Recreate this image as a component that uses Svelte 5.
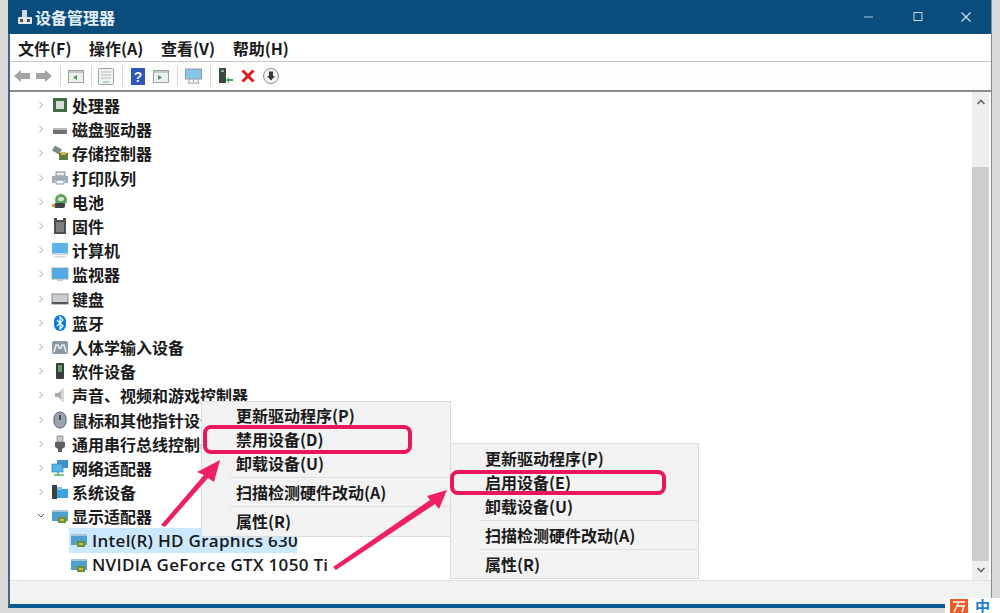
<script>
  const categories = [
    ["cpu", "处理器"], ["disk", "磁盘驱动器"], ["storage", "存储控制器"], ["printer", "打印队列"],
    ["battery", "电池"], ["firmware", "固件"], ["computer", "计算机"], ["monitor", "监视器"],
    ["keyboard", "键盘"], ["bluetooth", "蓝牙"], ["hid", "人体学输入设备"], ["software", "软件设备"],
    ["sound", "声音、视频和游戏控制器"], ["mouse", "鼠标和其他指针设备"], ["usb", "通用串行总线控制器"],
    ["network", "网络适配器"], ["system", "系统设备"]
  ];
  const adapters = [
    { name: "Intel(R) HD Graphics 630", selected: true },
    { name: "NVIDIA GeForce GTX 1050 Ti", selected: false }
  ];
  const menus = [
    { cls: "menu-a", second: "禁用设备(D)" },
    { cls: "menu-b", second: "启用设备(E)" }
  ];
</script>

{#snippet icon(kind)}
  <svg class="icon" width="18" height="18" viewBox="0 0 18 18">
    {#if kind === "cpu"}
      <rect x="2" y="2" width="14" height="14" fill="#3f6b45" />
      <rect x="5" y="5" width="8" height="8" fill="#d8dcd8" />
    {:else if kind === "disk"}
      <rect x="2" y="8" width="14" height="6" rx="1" fill="#6d7072" />
      <rect x="2" y="8" width="14" height="2" fill="#b8bcbf" />
    {:else if kind === "storage"}
      <rect x="2" y="3" width="8" height="6" fill="#7d8a8a" transform="rotate(30 6 6)" />
      <rect x="8" y="9" width="9" height="7" fill="#5f7d3a" />
      <rect x="10" y="8" width="5" height="3" fill="#d4b24a" />
    {:else if kind === "printer"}
      <rect x="5" y="3" width="9" height="4" fill="#e8eef2" stroke="#7a8a96" />
      <path d="M1 7h16v7h-3v-3H4v3H1z" fill="#a0abb4" />
      <rect x="5" y="11" width="8" height="4" fill="#f4f6f8" stroke="#8a96a0" />
    {:else if kind === "battery"}
      <circle cx="10" cy="7" r="6" fill="#5da35a" />
      <ellipse cx="10" cy="6" rx="3" ry="2" fill="#d9e6d9" />
      <rect x="3" y="10" width="11" height="5" rx="2" fill="#3d4144" />
      <rect x="1" y="11" width="3" height="3" fill="#c9a22e" />
    {:else if kind === "firmware"}
      <path d="M3 1h3v2h6V1h3v16H3z" fill="#4b4d4f" />
      <rect x="5" y="5" width="8" height="10" fill="#7b7d7f" />
    {:else if kind === "computer"}
      <rect x="1" y="2" width="16" height="10" fill="#58b4ea" />
      <rect x="1" y="12" width="16" height="2" fill="#cfd8dd" />
      <rect x="3" y="15" width="12" height="1.500" fill="#d6dcdf" />
    {:else if kind === "monitor"}
      <rect x="1" y="3" width="16" height="11" fill="#4fa9e2" stroke="#8fa8b8" />
      <rect x="6" y="14" width="6" height="2" fill="#c0cad0" />
    {:else if kind === "keyboard"}
      <rect x="1" y="4" width="16" height="10" fill="#c9ced2" stroke="#888" />
      <rect x="1" y="12" width="16" height="2" fill="#55585a" />
    {:else if kind === "bluetooth"}
      <rect x="3" y="1" width="12" height="16" rx="6" fill="#0a7be0" />
      <path d="M6 6l6 6-3 3V3l3 3-6 6" fill="none" stroke="#fff" stroke-width="1.200" />
    {:else if kind === "hid"}
      <rect x="1" y="3" width="16" height="13" rx="2" fill="#8a99a8" />
      <path d="M3 14l2-7h2l1 3h2l1-3h2l2 7" fill="none" stroke="#e8edf0" stroke-width="1.600" />
    {:else if kind === "software"}
      <rect x="5" y="1" width="8" height="16" rx="1" fill="#3b3f3c" />
      <rect x="7" y="3" width="4" height="7" fill="#5ba35a" />
    {:else if kind === "sound"}
      <path d="M4 7h3l6-5v14l-6-5H4z" fill="#a6acb0" />
      <rect x="10" y="3" width="3" height="12" fill="#d3d7da" />
    {:else if kind === "mouse"}
      <rect x="3" y="1" width="12" height="16" rx="6" fill="#9aa3ae" stroke="#5a6068" />
      <rect x="8" y="4" width="2" height="5" fill="#474c52" />
    {:else if kind === "usb"}
      <rect x="6" y="1" width="6" height="6" fill="#c6c8ca" stroke="#666" stroke-width=".6" />
      <path d="M4 7h10v5l-3 2v3H7v-3l-3-2z" fill="#5c6064" />
    {:else if kind === "network"}
      <rect x="6" y="1" width="11" height="8" fill="#3a93d0" />
      <rect x="1" y="5" width="11" height="8" fill="#58b4ea" stroke="#2f7fb5" stroke-width=".7" />
      <path d="M3 16h10M7 13v3" stroke="#57b45a" stroke-width="1.600" />
    {:else if kind === "system"}
      <rect x="1" y="2" width="5" height="14" fill="#3d4144" />
      <rect x="6" y="6" width="11" height="9" fill="#39a2e0" />
      <rect x="6" y="4" width="5" height="3" fill="#7cc5ee" />
    {:else}
      <rect x="1" y="3" width="16" height="11" fill="#4f9fd0" />
      <rect x="1" y="3" width="16" height="2" fill="#a9c6d8" />
      <rect x="7" y="10" width="8" height="6" fill="#6b8f35" />
      <rect x="9" y="12" width="4" height="2" fill="#e0b93c" />
    {/if}
  </svg>
{/snippet}

<div class="window">
  <header class="title">
    <svg width="16" height="16" viewBox="0 0 16 16">
      <rect x="5" y="1" width="5" height="7" fill="#cfd8de" />
      <rect x="1" y="8" width="14" height="7" rx="1" fill="#e4e8ea" />
      <rect x="3" y="10" width="3" height="3" fill="#45525c" />
      <rect x="10" y="10" width="3" height="3" fill="#45525c" />
    </svg>
    <span class="title-text">设备管理器</span>
    <div class="controls">
      <svg width="12" height="12" viewBox="0 0 12 12"><path d="M1 6h9" stroke="#a9c8dc" stroke-width="1" /></svg>
      <svg width="12" height="12" viewBox="0 0 12 12"><rect x="2" y="1.500" width="8" height="8" fill="none" stroke="#c3dbe9" /></svg>
      <svg width="12" height="12" viewBox="0 0 12 12"><path d="M1.500 1.500l9 9M10.500 1.500l-9 9" stroke="#d5e4ee" stroke-width="1.100" /></svg>
    </div>
  </header>

  <nav class="menubar">
    <span>文件(F)</span><span>操作(A)</span><span>查看(V)</span><span>帮助(H)</span>
  </nav>

  <div class="toolbar">
    <svg class="back" width="16" height="14" viewBox="0 0 16 14"><path d="M0 7l7-6v3h9v6H7v3z" fill="#a3a5a5" /></svg>
    <svg width="16" height="14" viewBox="0 0 16 14"><path d="M16 7L9 1v3H0v6h9v3z" fill="#a3a5a5" /></svg>
    <i class="sep snug"></i>
    <svg width="16" height="16" viewBox="0 0 16 16"><rect x=".5" y="2.500" width="15" height="12" fill="#eef0f0" stroke="#98a0a0" /><rect x="1" y="3" width="14" height="2" fill="#c2c8c8" /><path d="M9 7v5l-4-2.500z" fill="#4e9a58" /></svg>
    <i class="sep tight"></i>
    <svg width="16" height="17" viewBox="0 0 16 17"><rect x=".5" y=".5" width="15" height="16" rx="1" fill="#f0f2f2" stroke="#9aa2a2" /><path d="M3 4h10M3 7h10M3 10h10" stroke="#b4bcbc" /><path d="M5 14h6" stroke="#7fa8bc" /></svg>
    <i class="sep"></i>
    <svg width="14" height="17" viewBox="0 0 14 17"><rect width="14" height="17" fill="#2f58b4" /><text x="7" y="14" text-anchor="middle" class="help">?</text></svg>
    <svg width="16" height="16" viewBox="0 0 16 16"><rect x=".5" y="2.500" width="15" height="12" fill="#eef0f0" stroke="#98a0a0" /><rect x="1" y="3" width="14" height="2" fill="#c2c8c8" /><path d="M5 7v5l4-2.500z" fill="#4e9a58" /></svg>
    <i class="sep snug"></i>
    <svg width="17" height="17" viewBox="0 0 17 17"><rect x=".5" y="1" width="16" height="10" fill="#8cc4e8" stroke="#8aa0ae" /><path d="M8.500 11v3M3 15h11M5 11l-2 4M12 11l2 4" stroke="#8aa0ae" /></svg>
    <i class="sep snug"></i>
    <svg width="15" height="17" viewBox="0 0 15 17"><rect x="1" y="0" width="7" height="15" fill="#3c4a3e" /><rect x="3" y="2" width="3" height="2" fill="#8fae8f" /><path d="M8 12l3-3v2h4v2h-4v2z" fill="#3aa855" /></svg>
    <svg width="14" height="14" viewBox="0 0 14 14"><path d="M1.500 1.500l11 11M12.500 1.500l-11 11" stroke="#d81e24" stroke-width="3" /></svg>
    <svg width="16" height="16" viewBox="0 0 16 16"><circle cx="8" cy="8" r="7.500" fill="#f4f4f4" stroke="#8e8e8e" /><path d="M6 3.500h4V8h2l-4 4.500L4 8h2z" fill="#3a3a3a" /></svg>
  </div>

  <div class="content">
    <div class="tree">
      {#each categories as [kind, label]}
        <div class="row">
          <svg class="chevron" width="6" height="8" viewBox="0 0 6 8"><path d="M1.500 1l3 3-3 3" fill="none" stroke="#a6a6a6" /></svg>
          {@render icon(kind)}
          <span>{label}</span>
        </div>
      {/each}
      <div class="row">
        <svg class="chevron" width="8" height="6" viewBox="0 0 8 6"><path d="M1 1l3 3 3-3" fill="none" stroke="#555" /></svg>
        {@render icon("display")}
        <span>显示适配器</span>
      </div>
      {#each adapters as adapter}
        <div class="row child" class:selected={adapter.selected}>
          {@render icon("display")}
          <span>{adapter.name}</span>
        </div>
      {/each}
    </div>
    <div class="scrollbar">
      <svg width="10" height="6" viewBox="0 0 10 6"><path d="M1.500 5L5 1.500 8.500 5" fill="none" stroke="#666" stroke-width="1.600" /></svg>
      <div class="track"><div class="thumb"></div></div>
      <svg width="10" height="6" viewBox="0 0 10 6"><path d="M1.500 1L5 4.500 8.500 1" fill="none" stroke="#666" stroke-width="1.600" /></svg>
    </div>
  </div>

  <div class="status"></div>
</div>

{#each menus as menu}
  <div class="ctx {menu.cls}">
    <div class="item">更新驱动程序(P)</div>
    <div class="item">{menu.second}</div>
    <div class="item">卸载设备(U)</div>
    <div class="rule"></div>
    <div class="item">扫描检测硬件改动(A)</div>
    <div class="rule"></div>
    <div class="item">属性(R)</div>
  </div>
{/each}

<div class="mark mark-a"></div>
<div class="mark mark-b"></div>

<svg class="arrows" width="1000" height="613" viewBox="0 0 1000 613">
  <path d="M161 525L204 475 197 472 220 460 214 482 208 478 165 527z" fill="#ee1f63" />
  <path d="M333 567L430 500 427 496 447 490 439 509 435 504 336 570z" fill="#ee1f63" />
</svg>

<div class="tray">
  <svg width="18" height="14" viewBox="0 0 18 14"><rect width="18" height="14" fill="#ee5a20" /><path d="M3 3h12M9 3L4 13M8 7h6l-2 6" fill="none" stroke="#fff" stroke-width="1.600" /></svg>
  <span>中</span>
</div>

<style>
  :global(body) {
    margin: 0;
    background: #d9d9d7;
    overflow: hidden;
    font-family: "Noto Sans CJK SC", "Noto Sans", sans-serif;
    color: #1a1a1a;
  }

  .window {
    margin-left: 8px;
    width: 984px;
    height: 608px;
    display: flex;
    flex-direction: column;
    background: #fff;
    box-sizing: border-box;
    border-left: 2px solid #3d6a8c;
    border-right: 1px solid #7b8b98;
    border-bottom: 4px solid #0c5a92;
  }

  .title {
    height: 34px;
    margin-left: -2px;
    padding-left: 9px;
    background: #0a4c7b;
    color: #e4edf3;
    display: flex;
    align-items: center;
    gap: 2px;
    flex: none;
  }

  .title-text {
    font-size: 16px;
    font-weight: 700;
  }

  .controls {
    margin-left: auto;
    display: flex;
    gap: 36.5px;
    padding-right: 19px;
  }

  .menubar {
    height: 28px;
    padding-left: 8px;
    display: flex;
    align-items: center;
    gap: 17.6px;
    font-size: 16px;
    font-weight: 700;
    border-bottom: 1px solid #c9c9c9;
    flex: none;
    box-sizing: border-box;
  }

  .toolbar {
    height: 30px;
    padding-left: 4px;
    display: flex;
    align-items: center;
    gap: 8px;
    background: #fdfdfc;
    border-bottom: 2px solid #8c8c8c;
    flex: none;
    box-sizing: border-box;
  }

  .back {
    margin-right: -2px;
  }

  .sep {
    width: 1px;
    height: 20px;
    background: #d6d6d6;
  }

  .snug {
    margin: 0 -.5px;
  }

  .tight {
    margin: 0 -1.5px;
  }

  .help {
    font: bold 14px "Liberation Sans", sans-serif;
    fill: #e8eefc;
  }

  .content {
    flex: 1;
    min-height: 0;
    display: flex;
    overflow: hidden;
  }

  .tree {
    flex: 1;
    padding: 1px 0 0 27px;
    font-size: 16px;
    font-weight: 700;
  }

  .row {
    height: 24.2px;
    display: flex;
    align-items: center;
    white-space: nowrap;
  }

  .chevron {
    width: 8px;
    margin-right: 6px;
  }

  .icon {
    margin-right: 3px;
    flex: none;
  }

  .child {
    margin-left: 32px;
    padding-left: 1px;
    width: 228px;
    box-sizing: border-box;
    font-family: "Open Sans", "Noto Sans", sans-serif;
    font-size: 17px;
    font-weight: 600;
    letter-spacing: 0.3px;
  }

  .child .icon {
    margin-right: 4px;
  }

  .selected {
    background: #cce8ff;
  }

  .scrollbar {
    width: 17px;
    margin-right: 2px;
    background: #f0eeec;
    display: flex;
    flex-direction: column;
    align-items: center;
    padding: 7px 0;
    gap: 6px;
    box-sizing: border-box;
  }

  .track {
    flex: 1;
    width: 100%;
    padding-top: 56px;
    box-sizing: border-box;
    display: flex;
  }

  .thumb {
    flex: 1;
    background: #cdcdcb;
  }

  .status {
    height: 24px;
    background: #f2f2f0;
    border-top: 1px solid #e2e2e2;
    flex: none;
    box-sizing: border-box;
  }

  .ctx {
    position: absolute;
    width: 249px;
    height: 136px;
    background: #f2f2f2;
    border: 1px solid #dcdcdc;
    box-sizing: border-box;
    padding: 2px 0 0 34px;
    font-size: 16px;
    font-weight: 700;
  }

  .menu-a {
    left: 201px;
    top: 401px;
    width: 250px;
    padding-top: 1px;
  }

  .menu-b {
    left: 450px;
    top: 443px;
  }

  .item {
    height: 24px;
    line-height: 24px;
    white-space: nowrap;
  }

  .rule {
    height: 1px;
    margin: 2px 0 2px -6px;
    background: #dedede;
  }

  .mark {
    position: absolute;
    box-sizing: border-box;
    border: 4px solid #e8175d;
    border-radius: 8px;
  }

  .mark-a {
    left: 203px;
    top: 425px;
    width: 209px;
    height: 29px;
  }

  .mark-b {
    left: 450px;
    top: 470px;
    width: 216px;
    height: 25px;
  }

  .arrows {
    position: absolute;
    left: 0;
    top: 0;
    pointer-events: none;
  }

  .tray {
    position: absolute;
    left: 945px;
    top: 598px;
    width: 55px;
    height: 15px;
    padding-left: 5px;
    box-sizing: border-box;
    background: #fff;
    display: flex;
    align-items: flex-end;
    gap: 7px;
    color: #1a7fd0;
    font-size: 15px;
    font-weight: 700;
    line-height: 15px;
  }
</style>
